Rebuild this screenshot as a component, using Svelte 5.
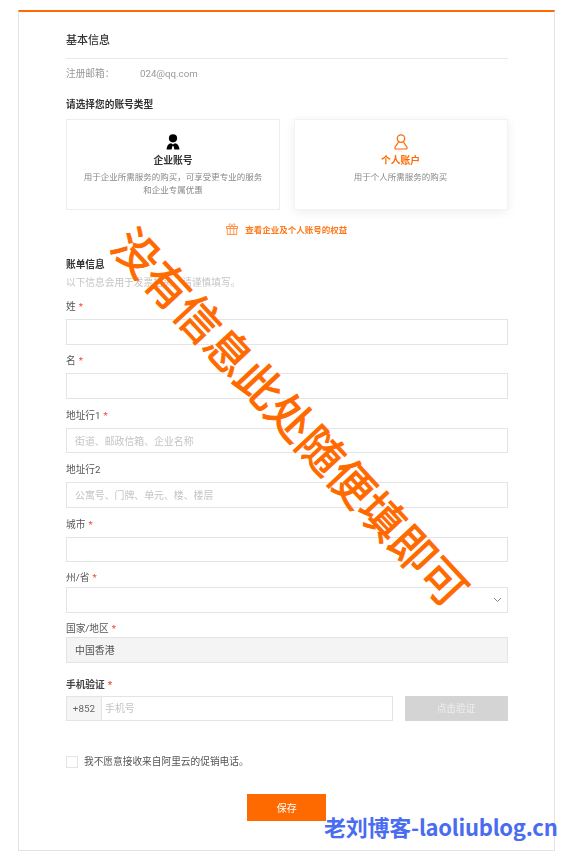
<script>
  const fields = [
    { label: '姓', req: true, ph: '' },
    { label: '名', req: true, ph: '' },
    { label: '地址行1', req: true, ph: '街道、邮政信箱、企业名称' },
    { label: '地址行2', req: false, ph: '公寓号、门牌、单元、楼、楼层' },
    { label: '城市', req: true, ph: '' }
  ];
</script>

<div class="page">
  <section class="card">
    <h1>基本信息</h1>
    <div class="mail"><span class="mail-k">注册邮箱&#xFF1A;</span><span>024@qq.com</span></div>
    <h2 class="type-title">请选择您的账号类型</h2>
    <div class="types">
      <div class="type">
        <svg width="14" height="16" viewBox="0 0 14 16" class="ico">
          <circle cx="7" cy="4.300" r="4.100" fill="#000" />
          <path d="M0.500 15.500C.8 11.500 2.600 9.600 5 9.200L7 10.500 9 9.200C11.400 9.600 13.200 11.500 13.500 15.500H8.400L7.500 12H6.500L5.600 15.500Z" fill="#000" />
        </svg>
        <div class="type-name">企业账号</div>
        <p>用于企业所需服务的购买&#xFF0C;可享受更专业的服务<br />和企业专属优惠</p>
      </div>
      <div class="type on">
        <svg width="14" height="16" viewBox="0 0 14 16" class="ico" fill="none" stroke="#ff6a00" stroke-width="1.200">
          <circle cx="7" cy="4.600" r="3.800" />
          <path d="M4.500 8.200 1 13.200C.7 14.200 1 15 2 15H12C13 15 13.300 14.200 13 13.200L9.500 8.200" />
        </svg>
        <div class="type-name">个人账户</div>
        <p>用于个人所需服务的购买</p>
      </div>
    </div>
    <div class="perk">
      <svg width="12" height="12" viewBox="0 0 12 12" fill="none" stroke="#ff8a3a" stroke-width="0.900">
        <path d="M.5 3.500H11.500V5.500H.5ZM1.300 5.500V11.500H10.700V5.500M4.200 3.500V11.500M7.800 3.500V11.500M4.200 3.500C2.500 2.500 3 .5 4.200 .8 5.200 1 6 2.500 6 3.500 6 2.500 6.800 1 7.800 .8 9 .5 9.500 2.500 7.800 3.500" />
      </svg>
      <span>查看企业及个人账号的权益</span>
    </div>

    <h2 class="bill">账单信息</h2>
    <div class="hint">以下信息会用于发票抬头&#xFF0C;请谨慎填写。</div>

    {#each fields as f}
      <div class="field">
        <div class="label">{f.label}{#if f.req}<i>*</i>{/if}</div>
        <div class="input"><span>{f.ph}</span></div>
      </div>
    {/each}

    <div class="field tight">
      <div class="label">州/省<i>*</i></div>
      <div class="input select">
        <svg width="9" height="6" viewBox="0 0 9 6" fill="none" stroke="#888" stroke-width="1"><path d="M1 1l3.500 3.500L8 1" /></svg>
      </div>
    </div>
    <div class="field tighter">
      <div class="label">国家/地区<i>*</i></div>
      <div class="input off"><span>中国香港</span></div>
    </div>

    <div class="field phone-f">
      <div class="label strong">手机验证<i>*</i></div>
      <div class="phone">
        <div class="input tel"><b>+852</b><span>手机号</span></div>
        <div class="verify">点击验证</div>
      </div>
    </div>

    <label class="agree"><span class="box"></span>我不愿意接收来自阿里云的促销电话。</label>
    <div class="save-row"><div class="save">保存</div></div>
  </section>

  <div class="stamp">没有信息此处随便填即可</div>
  <div class="brand">老刘博客-laoliublog.cn</div>
</div>

<style>
  :global(body) { margin: 0; background: #fff; }
  .page {
    position: relative;
    width: 583px;
    height: 864px;
    overflow: hidden;
    padding-top: 10px;
    box-sizing: border-box;
    font-family: Roboto, "Noto Sans CJK SC", sans-serif;
    font-size: 9.700px;
    color: #555;
  }
  .card {
    margin-left: 18px;
    width: 537px;
    height: 841px;
    box-sizing: border-box;
    border: 1px solid #e3e3e3;
    border-top: 2px solid #ff6a00;
    padding: 0 46.500px 0 47px;
    filter: blur(0.3px);
  }
  h1 {
    margin: 21px 0 0;
    padding-bottom: 10px;
    font-size: 11px;
    line-height: 15px;
    font-weight: 500;
    color: #333;
    border-bottom: 1.500px solid #e8e8e8;
  }
  .mail {
    display: flex;
    margin-top: 8px;
    line-height: 14px;
    color: #999;
  }
  .mail-k { width: 74px; }
  h2 {
    margin: 0;
    font-size: 9.700px;
    line-height: 14px;
    font-weight: 700;
    color: #333;
  }
  .type-title { margin-top: 17px; }
  .types {
    display: flex;
    justify-content: space-between;
    margin-top: 7px;
  }
  .type {
    width: 214px;
    height: 91px;
    box-sizing: border-box;
    border: 1px solid #eee;
    padding-top: 14px;
    text-align: center;
    color: #888;
  }
  .type.on {
    border-color: #f3f3f3;
    box-shadow: 0 2px 10px rgba(0, 0, 0, 0.07);
  }
  .ico { display: block; margin: 0 auto; }
  .type-name {
    margin-top: 4px;
    font-size: 9.800px;
    line-height: 14px;
    font-weight: 700;
    color: #333;
  }
  .on .type-name { color: #ff6a00; }
  p { margin: 3px 0 0; line-height: 13px; font-size: 8.500px; }
  .perk {
    display: flex;
    justify-content: center;
    align-items: center;
    gap: 7px;
    margin-top: 13px;
    height: 12px;
    font-size: 8.500px;
    font-weight: 700;
    color: #ff7a1f;
  }
  .bill { margin-top: 23px; }
  .hint { margin-top: 4px; line-height: 14px; color: #c4c4c4; }
  .field { margin-top: 9.900px; }
  .hint + .field { margin-top: 10px; }
  .label { line-height: 14px; margin-bottom: 5px; color: #555; }
  .label.strong { font-weight: 700; color: #444; }
  .label i {
    margin-left: 3px;
    font-style: normal;
    color: #f04a30;
  }
  .input {
    display: flex;
    align-items: center;
    height: 25.500px;
    box-sizing: border-box;
    border: 1px solid #e4e4e4;
    padding: 0 8px;
    font-size: 9.900px;
    color: #c4c4c4;
  }
  .tight { margin-top: 9px; }
  .tight .label { margin-bottom: 2px; }
  .tighter { margin-top: 9.500px; }
  .tighter .label { margin-bottom: 1px; }
  .select { justify-content: flex-end; padding-right: 5px; }
  .off { background: #f4f4f4; color: #555; }
  .phone-f { margin-top: 15px; }
  .phone-f .label { margin-bottom: 4px; }
  .phone { display: flex; justify-content: space-between; }
  .tel { width: 327px; padding: 0; }
  .tel b {
    display: flex;
    align-items: center;
    justify-content: center;
    width: 34px;
    height: 100%;
    background: #f5f5f5;
    border-right: 1px solid #e4e4e4;
    font-weight: 400;
    color: #666;
  }
  .tel span { padding-left: 3px; }
  .verify {
    display: flex;
    align-items: center;
    justify-content: center;
    width: 103px;
    height: 25.500px;
    background: #d4d4d4;
    color: #eee;
  }
  .agree {
    display: flex;
    align-items: center;
    gap: 6px;
    margin-top: 33.500px;
    line-height: 14px;
    color: #555;
  }
  .box {
    width: 10px;
    height: 10px;
    border: 1px solid #e4e4e4;
  }
  .save-row { display: flex; justify-content: center; margin-top: 25px; }
  .save {
    display: flex;
    align-items: center;
    justify-content: center;
    width: 79px;
    height: 27.500px;
    background: #ff6a00;
    color: #fff;
    font-size: 10px;
  }
  .stamp {
    position: absolute;
    left: 32px;
    top: 391px;
    width: 520px;
    transform: rotate(47deg);
    font-family: "Noto Sans CJK SC", sans-serif;
    font-size: 45px;
    line-height: 50px;
    white-space: nowrap;
    text-align: center;
    color: #ff6a00;
    -webkit-text-stroke: 1px #ff6a00;
  }
  .brand {
    position: absolute;
    left: 324px;
    top: 813px;
    font-family: "Noto Sans CJK SC", sans-serif;
    font-size: 22px;
    line-height: 26px;
    font-weight: 700;
    letter-spacing: -0.25px;
    white-space: nowrap;
    color: #4a6cf0;
  }
</style>
